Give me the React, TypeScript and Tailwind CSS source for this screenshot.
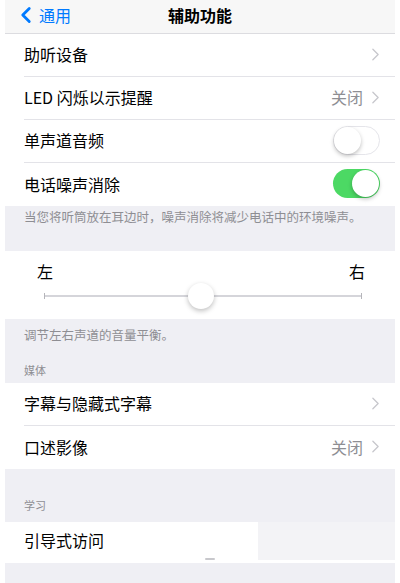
import { ChevronLeft, ChevronRight } from 'lucide-react'

const font = { fontFamily: '"Noto Sans CJK SC", "Noto Sans", sans-serif' }

function Chevron() {
  return <ChevronRight className="-mr-[6px] h-[21px] w-[21px] text-[#c7c7cc]" strokeWidth={1.5} />
}

function Toggle({ on }: { on: boolean }) {
  return (
    <div
      className={`relative h-[29px] w-[47px] rounded-full ${
        on ? 'bg-[#4cd964]' : 'border border-[#e5e5ea] bg-white'
      }`}
    >
      <div
        className={`absolute h-[27px] w-[27px] rounded-full bg-white shadow-[0_2px_4px_rgba(0,0,0,0.25)] ${
          on ? 'top-[1px] right-[1px]' : 'top-0 left-0'
        }`}
      />
    </div>
  )
}

function Row({
  label,
  value,
  chevron,
  toggle,
  last,
}: {
  label: string
  value?: string
  chevron?: boolean
  toggle?: 'on' | 'off'
  last?: boolean
}) {
  return (
    <div className="bg-white pl-[19px]">
      <div
        className={`flex h-[43px] items-center justify-between pr-[15px] pb-[2px] ${
          last ? '' : 'border-b border-[#e3e3e8]'
        }`}
      >
        <span className="text-[16px] text-black">{label}</span>
        <div className="flex items-center gap-[2px]">
          {value && <span className="text-[16px] text-[#8e8e93]">{value}</span>}
          {chevron && <Chevron />}
          {toggle && <Toggle on={toggle === 'on'} />}
        </div>
      </div>
    </div>
  )
}

export default function App() {
  return (
    <div className="h-[583px] w-[400px] overflow-hidden bg-white px-[5px]" style={font}>
      <div className="h-full bg-[#efeff4]">
        {/* Nav bar */}
        <div className="relative flex h-[34px] items-center justify-center border-b border-[#dcdce0] bg-[#f7f7f7] pb-[3px]">
          <div className="absolute top-[2px] left-[8px] flex items-center text-[#007aff]">
            <ChevronLeft className="h-[26px] w-[26px]" strokeWidth={2.6} />
            <span className="text-[16px]">通用</span>
          </div>
          <span className="text-[16px] font-semibold text-black">辅助功能</span>
        </div>

        <Row label="助听设备" chevron />
        <Row label="LED 闪烁以示提醒" value="关闭" chevron />
        <Row label="单声道音频" toggle="off" />
        <Row label="电话噪声消除" toggle="on" last />

        <div className="h-[45px] px-[19px] pt-[2px] text-[12.5px] text-[#8e8e93]">
          当您将听筒放在耳边时，噪声消除将减少电话中的环境噪声。
        </div>

        {/* Balance slider */}
        <div className="h-[68px] bg-white px-[32px] pt-[8px]">
          <div className="flex justify-between text-[16px] text-black">
            <span>左</span>
            <span className="-mr-[2px]">右</span>
          </div>
          <div className="relative -mt-[1px] flex h-[28px] items-center pr-[1px] pl-[7px]">
            <div className="h-[6px] w-px bg-[#b5b5ba]" />
            <div className="h-[2px] flex-1 bg-[#d5d5da]" />
            <div className="h-[6px] w-px bg-[#b5b5ba]" />
            <div className="absolute top-[1px] left-[151px] h-[26px] w-[26px] rounded-full bg-white shadow-[0_2px_5px_rgba(0,0,0,0.25)]" />
          </div>
        </div>

        <div className="px-[19px] pt-[7px] text-[12.5px] text-[#8e8e93]">调节左右声道的音量平衡。</div>
        <div className="px-[19px] pt-[17px] pb-[5px] text-[11px] text-[#8e8e93]">媒体</div>

        <Row label="字幕与隐藏式字幕" chevron />
        <Row label="口述影像" value="关闭" chevron last />

        <div className="flex h-[53px] items-end px-[19px] pb-[9px] text-[11px] text-[#8e8e93]">学习</div>

        <div className="flex h-[38px]">
          <div className="flex w-[253px] items-center bg-white pb-[2px] pl-[19px]">
            <span className="text-[16px] text-black">引导式访问</span>
          </div>
          <div className="flex-1 bg-[#f3f3f6]" />
        </div>
        <div className="relative h-[3px] bg-white">
          <div className="absolute -top-[2px] left-[200px] h-[2px] w-[10px] rounded-full bg-[#c8c8cc]" />
        </div>
      </div>
    </div>
  )
}
